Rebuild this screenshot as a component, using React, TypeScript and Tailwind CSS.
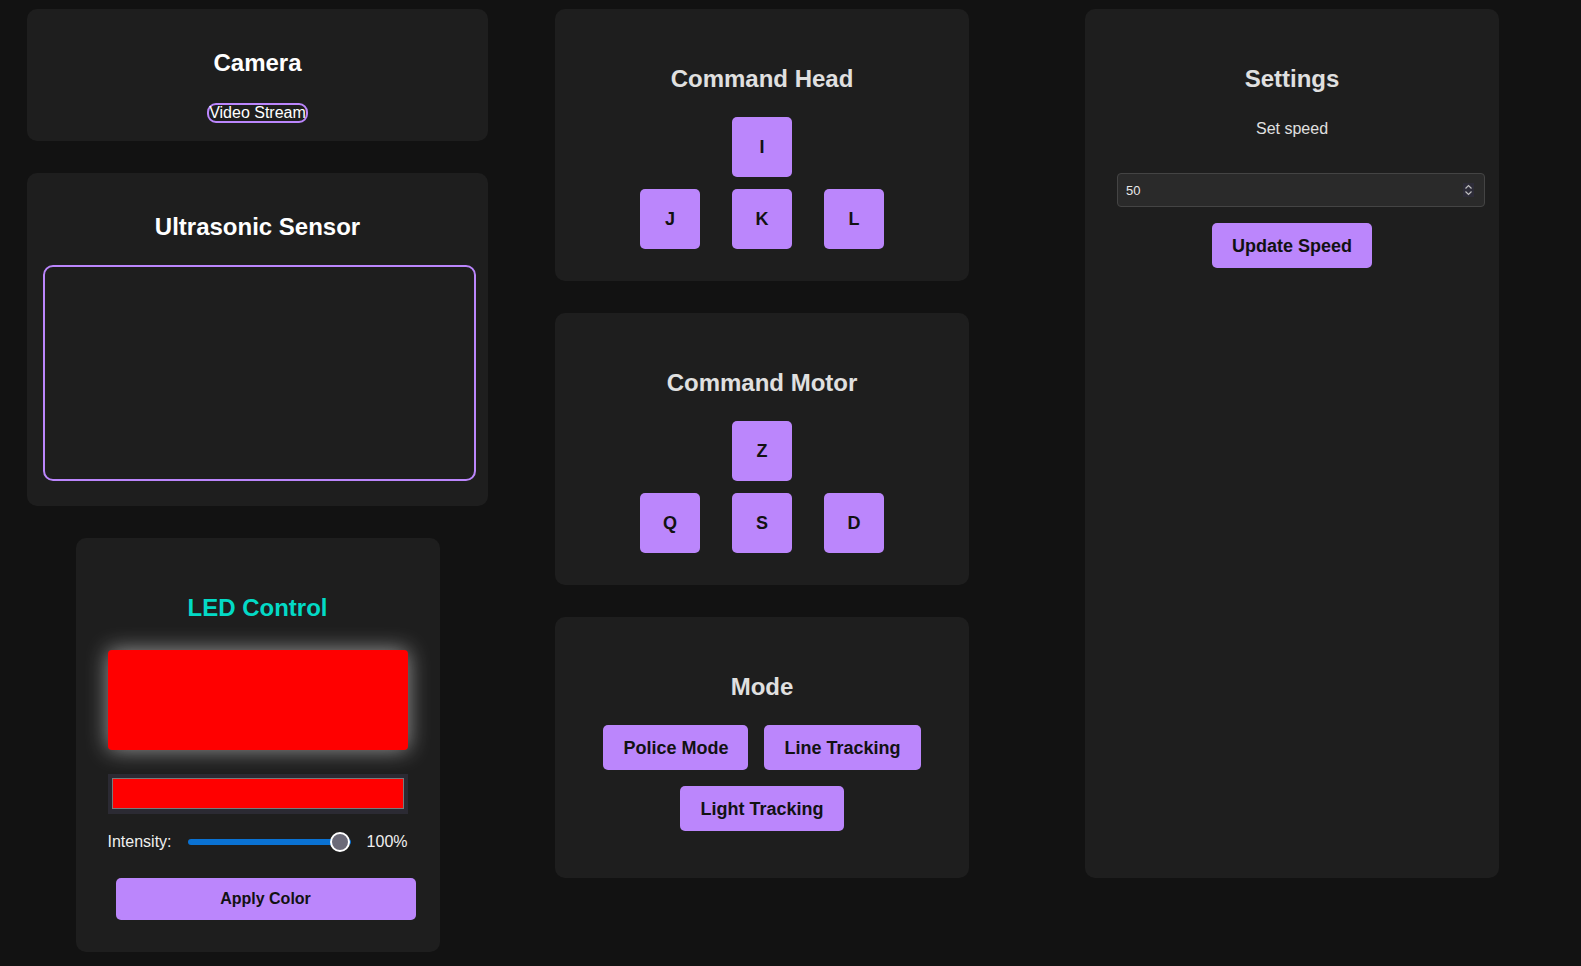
import { ReactNode } from "react";

const headKeys = ["I", "J", "K", "L"];
const motorKeys = ["Z", "Q", "S", "D"];
const modes = ["Police Mode", "Line Tracking", "Light Tracking"];

function Card({ className, children }: { className?: string; children: ReactNode }) {
  return <div className={`rounded-[10px] bg-[#1e1e1e] ${className ?? ""}`}>{children}</div>;
}

function Title({ children, className }: { children: ReactNode; className?: string }) {
  return (
    <h2 className={`text-center text-2xl font-bold leading-[28px] ${className ?? "text-[#e0e0e0]"}`}>
      {children}
    </h2>
  );
}

function KeyPad({ keys }: { keys: string[] }) {
  const [top, left, mid, right] = keys;
  const key = "flex h-[60px] w-[60px] items-center justify-center rounded-[5px] bg-[#bb86fc] text-lg font-bold text-[#121212]";
  return (
    <div className="mt-6 grid grid-cols-[60px_60px_60px] justify-center gap-x-8 gap-y-3">
      <div />
      <button className={key}>{top}</button>
      <div />
      <button className={key}>{left}</button>
      <button className={key}>{mid}</button>
      <button className={key}>{right}</button>
    </div>
  );
}

function Spinner() {
  return (
    <div className="flex h-[14px] w-[11px] items-center justify-center bg-[#2d2c38]">
      <svg width="9" height="12" viewBox="0 0 9 12" fill="none" stroke="#bdbdbd" strokeWidth="1.2">
        <path d="M1.5 4.5 L4.5 1.5 L7.5 4.5" />
        <path d="M1.5 7.5 L4.5 10.5 L7.5 7.5" />
      </svg>
    </div>
  );
}

export default function App() {
  return (
    <div className="flex min-h-screen items-start bg-[#121212] pl-[27px] pt-[9px] pb-4 font-['Liberation_Sans',Arial,sans-serif]">
      {/* left column */}
      <div className="flex w-[461px] flex-col items-center gap-8">
        <Card className="w-full pt-10 pb-[18px]">
          <Title className="text-white">Camera</Title>
          <div className="mt-[26px] flex justify-center">
            <span className="box-border rounded-[9px] border-2 border-[#bb86fc] text-base leading-4 whitespace-nowrap text-white">
              Video Stream
            </span>
          </div>
        </Card>

        <Card className="w-full pt-10 pb-[25px] pl-4">
          <Title className="-ml-4 text-white">Ultrasonic Sensor</Title>
          <div className="mt-6 h-[216px] w-[433px] rounded-[10px] border-2 border-[#bb86fc] bg-[#1e1e1e]" />
        </Card>

        <Card className="w-[364px] px-8 pt-14 pb-8">
          <Title className="text-[#03dac6]">LED Control</Title>
          <div className="mt-7 h-[100px] w-[300px] rounded-[4px] bg-[#ff0000] shadow-[0_0_22px_rgba(255,255,255,0.55)]" />
          <div className="mt-6 flex h-10 w-[300px] bg-[#2b2a33] px-1 py-1 pb-[5px]">
            <div className="flex-1 border border-[#7a7a7a] bg-[#ff0000]" />
          </div>
          <div className="mt-[18px] flex h-5 w-[300px] items-center gap-4 text-base text-[#f0f0f0]">
            <span>Intensity:</span>
            <div className="relative flex h-5 flex-1 items-center">
              <div className="h-[6px] w-full rounded-full bg-[#0a72d3]" />
              <div className="absolute right-[1px] h-5 w-5 rounded-full border-2 border-white bg-[#6b6a78]" />
            </div>
            <span>100%</span>
          </div>
          <button className="mt-[26px] ml-2 h-[42px] w-[300px] rounded-[5px] bg-[#bb86fc] text-base font-bold text-[#121212]">
            Apply Color
          </button>
        </Card>
      </div>

      {/* middle column */}
      <div className="ml-[67px] flex w-[414px] flex-col gap-8">
        <Card className="pt-14 pb-8">
          <Title>Command Head</Title>
          <KeyPad keys={headKeys} />
        </Card>

        <Card className="pt-14 pb-8">
          <Title>Command Motor</Title>
          <KeyPad keys={motorKeys} />
        </Card>

        <Card className="px-8 pt-14 pb-[47px]">
          <Title>Mode</Title>
          <div className="mt-6 flex flex-wrap justify-center gap-4">
            {modes.map((m) => (
              <button
                key={m}
                className="h-[45px] rounded-[5px] bg-[#bb86fc] px-5 text-lg font-bold whitespace-nowrap text-[#121212]"
              >
                {m}
              </button>
            ))}
          </div>
        </Card>
      </div>

      {/* right column */}
      <div className="ml-[116px] w-[414px]">
        <Card className="h-[869px] px-8 pt-14">
          <Title>Settings</Title>
          <p className="mt-[27px] text-center text-base leading-[18px] text-[#e0e0e0]">Set speed</p>
          <div className="mt-[35px] flex h-[34px] w-[368px] items-center justify-between rounded-[4px] border border-[#444] bg-[#2a2a2a] pr-[10px] pl-2">
            <span className="pt-px text-[13px] text-[#e8e8e8]">50</span>
            <Spinner />
          </div>
          <div className="mt-4 flex justify-center">
            <button className="h-[45px] rounded-[5px] bg-[#bb86fc] px-5 text-lg font-bold text-[#121212]">
              Update Speed
            </button>
          </div>
        </Card>
      </div>
    </div>
  );
}
